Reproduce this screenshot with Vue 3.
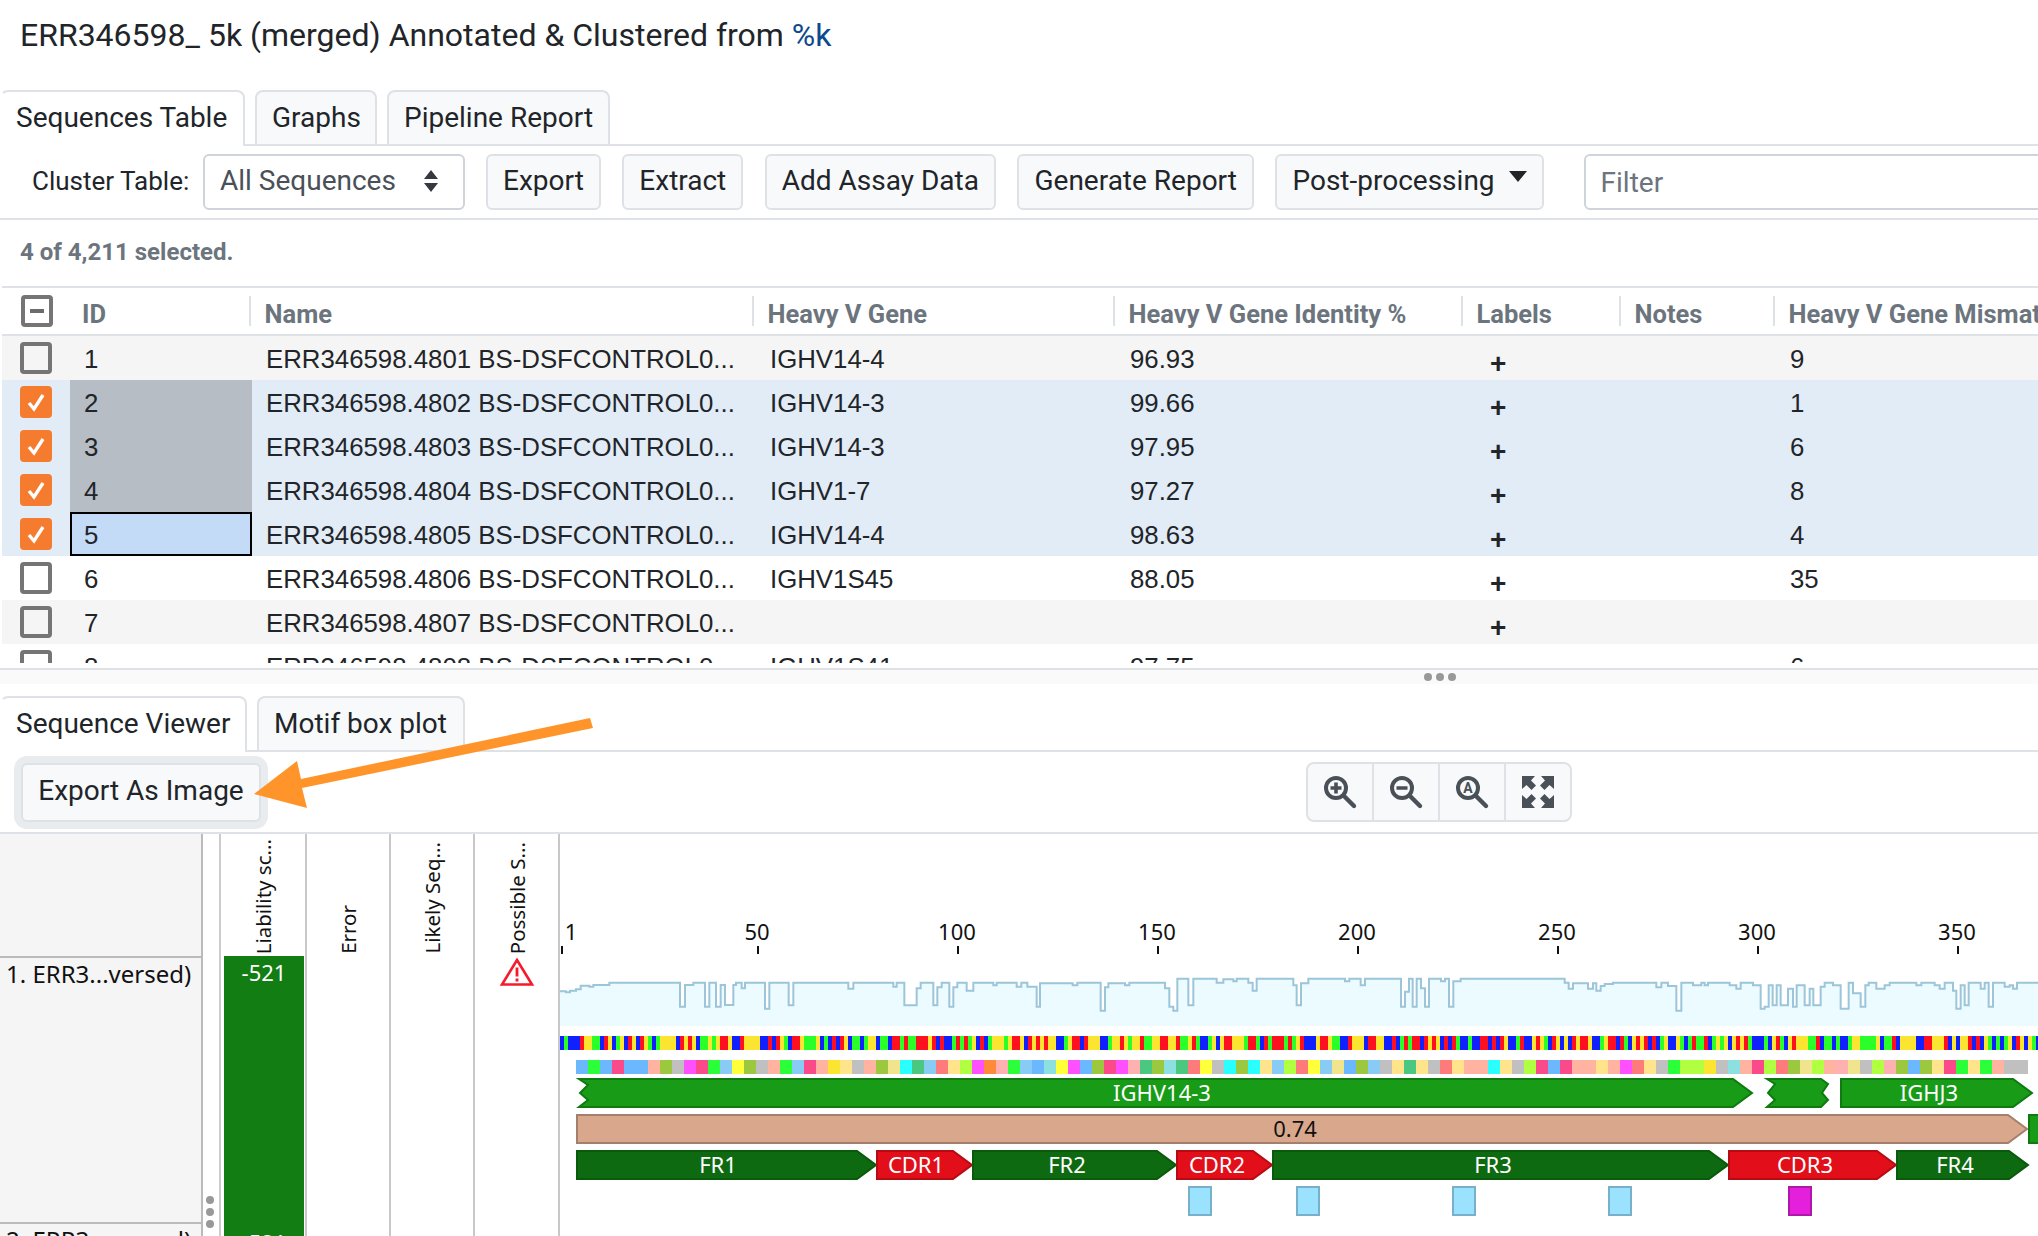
<script setup>
const rows = [
  { id: 1, n: '4801', gene: 'IGHV14-4', pct: '96.93', mis: '9', bg: 'stripe' },
  { id: 2, n: '4802', gene: 'IGHV14-3', pct: '99.66', mis: '1', sel: true, range: true },
  { id: 3, n: '4803', gene: 'IGHV14-3', pct: '97.95', mis: '6', sel: true, range: true },
  { id: 4, n: '4804', gene: 'IGHV1-7', pct: '97.27', mis: '8', sel: true, range: true },
  { id: 5, n: '4805', gene: 'IGHV14-4', pct: '98.63', mis: '4', sel: true, focus: true },
  { id: 6, n: '4806', gene: 'IGHV1S45', pct: '88.05', mis: '35' },
  { id: 7, n: '4807', gene: '', pct: '', mis: '', bg: 'stripe' },
  { id: 8, n: '4808', gene: 'IGHV1S41', pct: '97.75', mis: '6' }
]
const ticks = [1, 50, 100, 150, 200, 250, 300, 350].map((n) => ({ n, x: 562 + (n - 1) * 4 }))

const z6 = [[30,274],[48,277],[60,272],[78,268],[92,257],[118,260],[130,255],[178,248],[390,320],[405,255],[430,248],[465,320],[478,248],[498,320],[512,255],[525,315],[550,255],[558,248],[575,265],[585,248],[645,326],[658,248],[716,316],[730,248],[895,266],[910,248],[1030,260],[1040,248],[1063,316],[1100,265],[1112,248],[1150,316],[1162,262],[1175,248],[1198,320],[1210,262],[1222,248],[1250,272],[1270,248],[1330,256],[1340,248],[1400,260],[1414,248],[1432,260],[1460,320]]
const z7 = [[0,250],[98,256],[112,248],[182,332],[195,262],[205,250],[255,256],[268,248],[375,265],[388,320],[400,332],[412,236],[445,316],[460,236],[530,248],[550,238],[580,244],[590,236],[625,248],[638,272],[650,236],[760,256],[770,316],[783,250],[805,236],[915,244],[928,236],[962,256],[975,236],[1083,320],[1095,275],[1107,236],[1118,320],[1130,236],[1143,265],[1155,320],[1167,236],[1203,244],[1215,236],[1227,320],[1240,244],[1262,236]]
const z8 = [[6,236],[80,248],[92,266],[105,250],[150,266],[165,250],[175,272],[188,258],[200,252],[225,248],[355,262],[370,248],[390,258],[415,332],[430,248],[465,256],[490,248],[500,256],[510,248],[575,256],[595,266],[608,248],[645,256],[668,326],[680,320],[692,256],[704,316],[716,256],[728,316],[750,266],[765,320],[776,256],[800,316],[815,266],[826,316],[848,260],[860,248],[885,256],[908,326],[932,248],[945,280],[968,320],[982,256],[992,248],[1015,266],[1040,256],[1055,248],[1135,256],[1150,248],[1190,256],[1205,266],[1220,248],[1245,272],[1255,326],[1268,256],[1280,316],[1292,248],[1328,266],[1340,248],[1352,320],[1365,248],[1400,260],[1415,256],[1425,266],[1437,248]]
const steps = [
  ...z6.map(([X, Y]) => [550 + X / 3, 900 + Y / 3]),
  ...z7.map(([X, Y]) => [1040 + X / 3, 900 + Y / 3]),
  ...z8.map(([X, Y]) => [1538 + X / 3, 900 + Y / 3])
]
const line = steps.map(([x, y], i) => (i === 0 ? `M${x} ${y}` : `H${x}V${y}`)).join('') + 'H2038'
const area = line + 'V1026H560Z'

const ntColors = { b: '#1020ff', r: '#ff1020', y: '#fbe530', g: '#2aff2a' }
const fit = (s, n) => (s + s).slice(0, n)
const nt =
  fit('bgbbbryyggbrybgybrybrygbgyyyybryrybggygyrrybbryyyybbrbrygbrrygggybgbrbrybggbgyybggbrrgrggrrryrbrbbgrgrgybrbgyyygyrrybryr', 120) +
  fit('yryybbgyrrbryyybbgyyrygyyrggyyrryyrggyrgbbgybyrryyygrrgbrgrrrgrgyrbbbyrrygg' + 'bbryyybrryybbrbgrgrrbryrybrbrgbbgbbrrbrbrybbgrbb', 125) +
  fit('ygbrybybryrrybbgyrrbrgbyryrbrbgybbygbgrggrbgygybyryrgbbbgbyrgbyryyyggrbggbgbbgyyggggybggrbyyyybbrryyyrbybyyrbrbygbgbgybryb', 125)
const ntCells = [...nt].map((c, i) => ({ x: 560 + i * 4, fill: ntColors[c] }))

const aaColors = { a: '#6cb8ff', g: '#2aff3a', p: '#fa4a8a', s: '#ffb3a0', o: '#9cc840', x: '#c0c0c0', m: '#ff50ff', l: '#88ccf5', y: '#ffff3a', d: '#fbe530', h: '#ffe48c', k: '#f0e48c', c: '#2affff', t: '#4ac880', r: '#ff7a7a', i: '#b0ff40', n: '#ff8a3a', q: '#ffb0b0', u: '#8ce0e0' }
const aa = 'agapaasoxmpglyoxsglpsdhxsokctlrhimnqgla' + 'uymaopmqtoutryxcochlirylkaolxhthxrhsschxip' + 'apsshsmrhxgiidxuspirokisqkxiqoaohpghgsxx'
const aaCells = [...aa].map((c, i) => ({ x: 576 + i * 12, fill: aaColors[c] }))

const arrow = (x1, x2, y1, y2) => {
  const m = (y1 + y2) / 2
  return `${x1},${y1} ${x2 - 19},${y1} ${x2},${m} ${x2 - 19},${y2} ${x1},${y2}`
}
const genes = [
  { pts: '579,1079 1733,1079 1752,1093 1733,1107 579,1107 588,1100 580,1093 588,1085', label: 'IGHV14-3', cx: 1162 },
  { pts: '1767,1079 1821,1079 1828,1084 1822,1093 1828,1100 1821,1107 1767,1107 1775,1100 1768,1093 1775,1084', label: '', cx: 0 },
  { pts: arrow(1841, 2032, 1079, 1107), label: 'IGHJ3', cx: 1929 }
]
const regions = [
  { x1: 577, x2: 876, label: 'FR1', cx: 718, cls: 'fr' },
  { x1: 877, x2: 972, label: 'CDR1', cx: 916, cls: 'cdr' },
  { x1: 973, x2: 1176, label: 'FR2', cx: 1067, cls: 'fr' },
  { x1: 1177, x2: 1272, label: 'CDR2', cx: 1217, cls: 'cdr' },
  { x1: 1273, x2: 1728, label: 'FR3', cx: 1493, cls: 'fr' },
  { x1: 1729, x2: 1896, label: 'CDR3', cx: 1805, cls: 'cdr' },
  { x1: 1897, x2: 2028, label: 'FR4', cx: 1955, cls: 'fr' }
].map((r) => ({ ...r, pts: arrow(r.x1, r.x2, 1151, 1179) }))
const salmon = arrow(577, 2027, 1115, 1143)
const motifs = [1189, 1297, 1453, 1609]
const heatCols = ['Liability sc...', 'Error', 'Likely Seq...', 'Possible S...']
</script>

<template>
  <div class="page">
    <h1 class="title">ERR346598_ 5k (merged) Annotated &amp; Clustered from <a class="link">%k</a></h1>

    <div class="tabs">
      <div class="tab active w1">Sequences Table</div>
      <div class="tab w2">Graphs</div>
      <div class="tab w3">Pipeline Report</div>
    </div>

    <div class="toolbar">
      <span class="tl">Cluster Table:</span>
      <div class="select">
        <span>All Sequences</span>
        <svg width="16" height="26" viewBox="0 0 16 26"><path d="M8 2l7 9H1zM8 24l-7-9h14z" fill="#343a40" /></svg>
      </div>
      <button class="btn">Export</button>
      <button class="btn">Extract</button>
      <button class="btn">Add Assay Data</button>
      <button class="btn">Generate Report</button>
      <button class="btn post">Post-processing<i class="caret"></i></button>
      <div class="filter">Filter</div>
    </div>

    <div class="count">4 of 4,211 selected.</div>

    <div class="thead">
      <div class="hc"><span class="cb minus"><i></i></span></div>
      <div class="hc hid">ID</div>
      <div class="hc sep">Name</div>
      <div class="hc sep">Heavy V Gene</div>
      <div class="hc sep">Heavy V Gene Identity %</div>
      <div class="hc sep">Labels</div>
      <div class="hc sep">Notes</div>
      <div class="hc sep">Heavy V Gene Mismatches</div>
    </div>

    <div class="tbody">
      <div v-for="r in rows" :key="r.id" class="row" :class="[r.bg, { sel: r.sel }]">
        <div class="cell chk">
          <span class="cb" :class="{ on: r.sel }">
            <svg v-if="r.sel" width="20" height="20" viewBox="0 0 20 20"><path d="M3 11l5 6L17 3" fill="none" stroke="#fff" stroke-width="3.4" /></svg>
          </span>
        </div>
        <div class="cell idc" :class="{ range: r.range, focus: r.focus }">{{ r.id }}</div>
        <div class="cell namec">ERR346598.{{ r.n }} BS-DSFCONTROL0...</div>
        <div class="cell genec">{{ r.gene }}</div>
        <div class="cell">{{ r.pct }}</div>
        <div class="cell plus"><span>+</span></div>
        <div class="cell"></div>
        <div class="cell">{{ r.mis }}</div>
      </div>
    </div>

    <div class="splitter"><i></i><i></i><i></i></div>

    <div class="tabs lower">
      <div class="tab active w4">Sequence Viewer</div>
      <div class="tab w5">Motif box plot</div>
    </div>

    <div class="viewbar">
      <button class="btn export">Export As Image</button>
      <div class="zoomgroup">
        <div class="zb">
          <svg width="36" height="36" viewBox="0 0 36 36"><circle cx="14" cy="14" r="10" fill="none" stroke="#495057" stroke-width="4" /><path d="M22 22l10 10" stroke="#495057" stroke-width="4.4" stroke-linecap="round" /><path d="M14 8.500v11M8.500 14h11" stroke="#495057" stroke-width="3.600" /></svg>
        </div>
        <div class="zb">
          <svg width="36" height="36" viewBox="0 0 36 36"><circle cx="14" cy="14" r="10" fill="none" stroke="#495057" stroke-width="4" /><path d="M22 22l10 10" stroke="#495057" stroke-width="4.4" stroke-linecap="round" /><path d="M8.500 14h11" stroke="#495057" stroke-width="3.600" /></svg>
        </div>
        <div class="zb">
          <svg width="36" height="36" viewBox="0 0 36 36"><circle cx="14" cy="14" r="10" fill="none" stroke="#495057" stroke-width="4" /><path d="M22 22l10 10" stroke="#495057" stroke-width="4.4" stroke-linecap="round" /><text x="14" y="19" text-anchor="middle" class="ai">A</text></svg>
        </div>
        <div class="zb">
          <svg width="32" height="32" viewBox="0 0 32 32" fill="#495057"><path d="M0 0H13L9 4.500L14 9.500L9.500 14L4.500 9L0 13Z" /><path d="M32 0H19L23 4.500L18 9.500L22.500 14L27.500 9L32 13Z" /><path d="M0 32H13L9 27.500L14 22.500L9.500 18L4.500 23L0 19Z" /><path d="M32 32H19L23 27.500L18 22.500L22.500 18L27.500 23L32 19Z" /></svg>
        </div>
      </div>
    </div>

    <div class="viewer">
      <div class="labels">
        <div class="lhead"></div>
        <div class="lrow">1. ERR3...versed)</div>
        <div class="lrow">2. ERR3...versed)</div>
      </div>
      <div class="grip"><i></i><i></i><i></i></div>
      <div v-for="(c, i) in heatCols" :key="c" class="hcol">
        <div class="hhead"><span>{{ c }}</span></div>
        <template v-if="i === 0">
          <div class="bar">-521</div>
          <div class="bar">-521</div>
        </template>
        <svg v-if="i === 3" class="warn" width="34" height="28" viewBox="0 0 34 28">
          <path d="M17 2L32 26.500H2Z" fill="#fff" stroke="#f51a2c" stroke-width="2.600" />
          <path d="M17 9.500V18.500M17 20.500V23.500" stroke="#f51a2c" stroke-width="2.800" />
        </svg>
      </div>
      <svg class="seq" width="1478" height="402" viewBox="560 834 1478 402">
        <g v-for="t in ticks" :key="t.n">
          <rect :x="t.x - 1" y="946" width="2" height="8" fill="#111" />
          <text :x="t.n === 1 ? t.x + 9 : t.x - 1" y="940" text-anchor="middle" class="rt">{{ t.n }}</text>
        </g>
        <path :d="area" fill="#ebfbff" />
        <path :d="line" fill="none" stroke="#9cc5d9" stroke-width="2" />
        <rect v-for="c in ntCells" :key="c.x" :x="c.x" y="1036" width="4" height="14" :fill="c.fill" />
        <rect v-for="c in aaCells" :key="c.x" :x="c.x" y="1060" width="12" height="14" :fill="c.fill" />
        <g v-for="g in genes" :key="g.pts">
          <polygon :points="g.pts" fill="#189c18" stroke="#0e7a10" stroke-width="2" />
          <text v-if="g.label" :x="g.cx" y="1101" text-anchor="middle" class="wt">{{ g.label }}</text>
        </g>
        <polygon :points="salmon" fill="#d9a88c" stroke="#a57f6d" stroke-width="2" />
        <text x="1295" y="1137" text-anchor="middle" class="bt">0.74</text>
        <rect x="2029" y="1115" width="12" height="28" fill="#189c18" stroke="#0e7a10" stroke-width="2" />
        <g v-for="r in regions" :key="r.label">
          <polygon :points="r.pts" :class="r.cls" stroke-width="2" />
          <text :x="r.cx" y="1173" text-anchor="middle" class="wt">{{ r.label }}</text>
        </g>
        <rect v-for="x in motifs" :key="x" :x="x" y="1187" width="22" height="28" fill="#9be2ff" stroke="#77b0c8" stroke-width="2" />
        <rect x="1789" y="1187" width="22" height="28" fill="#e520dc" stroke="#b018a8" stroke-width="2" />
      </svg>
    </div>

    <svg class="pointer" width="620" height="130" viewBox="0 700 620 130">
      <polygon points="254,794 297,761 301,779 590,718 593,728 302,788 307,808" fill="#ff952a" />
    </svg>
  </div>
</template>

<style scoped>
.page {
  position: relative;
  width: 2038px;
  height: 1236px;
  overflow: hidden;
  background: #fff;
  font-family: Roboto, sans-serif;
  color: #212529;
  display: flex;
  flex-direction: column;
}
.title {
  margin: 0;
  height: 90px;
  flex: none;
  padding: 16px 0 0 20px;
  box-sizing: border-box;
  font-size: 32px;
  line-height: 38px;
  font-weight: 400;
}
.link { color: #0b4a8c; }
.tabs {
  flex: none;
  height: 54px;
  display: flex;
  gap: 10px;
  border-bottom: 2px solid #dee2e6;
}
.tab {
  box-sizing: border-box;
  height: 54px;
  background: #f8f9fa;
  border: 2px solid #dee2e6;
  border-bottom: 0;
  border-radius: 8px 8px 0 0;
  font-size: 28px;
  line-height: 52px;
  padding-left: 15px;
}
.tab.active {
  height: 56px;
  background: #fff;
  border-left-color: transparent;
  padding-left: 14px;
}
.w1 { width: 245px; }
.w2 { width: 122px; }
.w3 { width: 223px; }
.w4 { width: 247px; }
.w5 { width: 208px; }
.toolbar {
  flex: none;
  height: 74px;
  box-sizing: border-box;
  display: flex;
  align-items: flex-start;
  padding: 8px 0 0 32px;
  border-bottom: 2px solid #dee2e6;
}
.tl {
  font-size: 26px;
  line-height: 54px;
  width: 171px;
  flex: none;
}
.select {
  flex: none;
  width: 262px;
  height: 56px;
  box-sizing: border-box;
  border: 2px solid #ced4da;
  border-radius: 6px;
  display: flex;
  align-items: center;
  justify-content: space-between;
  padding: 0 24px 3px 15px;
  font-size: 28px;
  color: #495057;
  margin-right: 21px;
}
.btn {
  flex: none;
  height: 56px;
  box-sizing: border-box;
  background: #f8f9fa;
  border: 2px solid #dee2e6;
  border-radius: 6px;
  padding: 0 15px 3px;
  font: 400 28px Roboto, sans-serif;
  color: #212529;
  margin-right: 21.500px;
  display: flex;
  align-items: center;
}
.post { margin-right: 40px; }
.caret {
  width: 0;
  height: 0;
  margin: -9px 0 0 14px;
  border-left: 9px solid transparent;
  border-right: 9px solid transparent;
  border-top: 11px solid #212529;
}
.filter {
  flex: none;
  width: 500px;
  height: 56px;
  box-sizing: border-box;
  border: 2px solid #ced4da;
  border-radius: 6px;
  padding-left: 15px;
  font-size: 28px;
  line-height: 54px;
  color: #6c757d;
}
.count {
  flex: none;
  height: 66px;
  box-sizing: border-box;
  padding: 16px 0 0 20px;
  font-size: 24px;
  line-height: 32px;
  font-weight: 700;
  color: #6c757d;
}
.thead {
  flex: none;
  margin-left: 2px;
  height: 50px;
  box-sizing: border-box;
  border-top: 2px solid #dee2e6;
  border-bottom: 2px solid #dee2e6;
  display: grid;
  grid-template-columns: 68px 179px 503px 361px 348px 158px 154px 1fr;
  align-items: center;
}
.hc {
  height: 30px;
  box-sizing: border-box;
  padding: 3px 0 0 13.500px;
  font-size: 25.500px;
  line-height: 30px;
  font-weight: 700;
  color: #6c757d;
  white-space: nowrap;
}
.hid { padding-left: 12px; }
.sep { border-left: 2px solid #dee2e6; }
.hc:first-child { padding: 0 0 0 18.500px; height: 32px; }
.tbody {
  flex: none;
  height: 327px;
  overflow: hidden;
  margin-left: 2px;
}
.row {
  height: 44px;
  display: grid;
  grid-template-columns: 68px 182px 500px 361px 348px 158px 154px 1fr;
  font-family: "Liberation Sans", Arial, sans-serif;
  font-size: 25.800px;
  color: #212529;
}
.stripe { background: #f5f5f5; }
.sel { background: #e1ecf7; }
.cell {
  padding-left: 17px;
  line-height: 46px;
  white-space: nowrap;
  overflow: hidden;
}
.chk {
  padding: 6px 0 0 18px;
  box-sizing: border-box;
}
.idc { padding-left: 14px; }
.namec { padding-left: 14px; }
.genec { padding-left: 18px; }
.range { background: #b6bdc5; }
.focus {
  background: #c4dbf7;
  box-shadow: inset 0 0 0 2px #000;
}
.plus span {
  font-size: 28px;
  font-weight: 700;
  margin-left: 12px;
  position: relative;
  top: 5px;
}
.cb {
  display: flex;
  align-items: center;
  justify-content: center;
  width: 32px;
  height: 32px;
  box-sizing: border-box;
  border: 4px solid #757575;
  border-radius: 4px;
  background: #fff;
}
.stripe .cb { background: #f5f5f5; }
.cb.on {
  background: #f57c2e;
  border-color: #f57c2e;
}
.minus { background: #fff; }
.minus i {
  width: 14px;
  height: 4px;
  background: #6c6c6c;
}
.splitter {
  flex: none;
  margin-top: 5px;
  height: 16px;
  box-sizing: border-box;
  border-top: 2px solid #dee2e6;
  background: #fafafa;
  display: flex;
  justify-content: center;
  align-items: center;
  gap: 4px;
  padding-left: 842px;
}
.splitter i {
  width: 8px;
  height: 8px;
  border-radius: 50%;
  background: #999;
}
.lower {
  margin-top: 12px;
}
.viewbar {
  flex: none;
  height: 82px;
  box-sizing: border-box;
  border-bottom: 2px solid #dee2e6;
  display: flex;
  align-items: flex-start;
  padding: 11px 0 0 21px;
  position: relative;
}
.export {
  width: 240px;
  height: 59px;
  margin: 0;
  justify-content: center;
  padding: 0 0 5px;
  box-shadow: 0 0 0 7px #e9ecef;
}
.zoomgroup {
  flex: none;
  display: flex;
  margin: -1px 0 0 1045px;
  width: 266px;
  height: 60px;
  box-sizing: border-box;
  border: 2px solid #dee2e6;
  border-radius: 8px;
  background: #f8f9fa;
  overflow: hidden;
}
.zb {
  flex: 1;
  display: flex;
  align-items: center;
  justify-content: center;
  border-right: 2px solid #dee2e6;
}
.zb:last-child { border-right: 0; }
.ai {
  font: 700 14px Roboto, sans-serif;
  fill: #495057;
}
.viewer {
  flex: 1;
  display: flex;
  min-height: 0;
  font-family: "Noto Sans", "Open Sans", sans-serif;
  overflow: hidden;
}
.labels {
  flex: none;
  width: 203px;
  box-sizing: border-box;
  background: #f5f5f5;
  border-right: 2px solid #bbb;
}
.lhead { height: 122px; }
.lrow {
  height: 266px;
  box-sizing: border-box;
  border-top: 2px solid #bbb;
  padding: 0 0 0 6px;
  font-size: 24px;
  line-height: 32px;
  white-space: nowrap;
  color: #111;
}
.grip {
  flex: none;
  width: 18px;
  box-sizing: border-box;
  border-right: 2px solid #ccc;
  display: flex;
  flex-direction: column;
  align-items: center;
  gap: 4px;
  padding: 362px 2px 0 0;
}
.grip i {
  width: 8px;
  height: 8px;
  border-radius: 50%;
  background: #999;
}
.hcol {
  flex: none;
  width: 84px;
  box-sizing: border-box;
  border-right: 2px solid #c8c8c8;
}
.hcol:nth-of-type(3) { width: 86px; }
.hcol:last-of-type { width: 85px; }
.hhead {
  height: 118px;
  display: flex;
  justify-content: center;
  align-items: flex-end;
}
.hhead span {
  writing-mode: vertical-rl;
  transform: rotate(180deg);
  font-size: 20.500px;
  line-height: 28px;
  white-space: nowrap;
  color: #111;
  margin-bottom: -2px;
}
.bar {
  margin: 4px 1px 0 3px;
  height: 262px;
  background: #117d12;
  color: #fff;
  font-size: 22px;
  line-height: 32px;
  text-align: center;
}
.bar + .bar { margin-top: 0; height: 40px; padding-top: 8px; }
.warn {
  display: block;
  margin: 6px auto 0;
}
.seq {
  flex: none;
  display: block;
}
.rt, .wt, .bt {
  font: 400 22px "Noto Sans", "Open Sans", sans-serif;
}
.rt, .bt { fill: #111; }
.wt { fill: #fff; }
.fr {
  fill: #0e6a10;
  stroke: #0a5a0c;
}
.cdr {
  fill: #e20e1a;
  stroke: #b50c14;
}
.pointer {
  position: absolute;
  left: 0;
  top: 700px;
  pointer-events: none;
}
</style>
